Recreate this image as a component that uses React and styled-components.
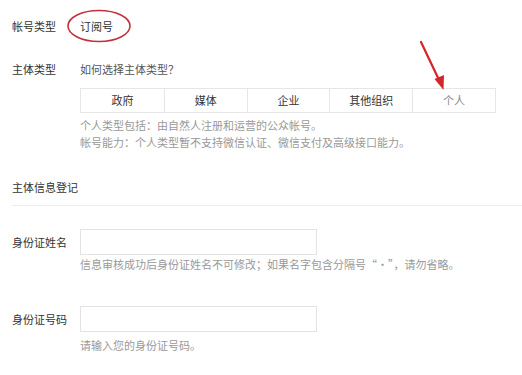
import styled, { createGlobalStyle } from "styled-components";

const Global = createGlobalStyle`
  html, body { margin: 0; padding: 0; background: #fff; }
  body {
    font-family: "Noto Sans CJK SC", "Noto Sans", sans-serif;
    font-size: 11px;
    color: #333;
  }
`;

const Page = styled.div`
  position: relative;
  width: 522px;
  height: 375px;
  overflow: hidden;
  padding: 16px 0 0 12px;
  box-sizing: border-box;
`;

const Row = styled.div`
  display: flex;
  align-items: ${(p) => (p.$center ? "center" : "flex-start")};
  margin-top: ${(p) => p.$mt || 0}px;
  line-height: 20px;
`;

const Label = styled.div`
  width: 68px;
  flex: none;
  color: #333;
`;

const Body = styled.div`
  flex: 1;
`;

const Value = styled.span`
  position: relative;
  display: inline-block;
  color: #333;
`;

const Circle = styled.svg`
  position: absolute;
  left: -13px;
  top: -6px;
  overflow: visible;
`;

const Question = styled.span`
  color: #555;
`;

const Tabs = styled.div`
  display: grid;
  grid-template-columns: repeat(5, 1fr);
  width: 416px;
  margin-top: 9px;
  border: 1px solid #e6e6e6;
  box-sizing: border-box;
  margin-left: 68px;
`;

const Tab = styled.div`
  height: 23px;
  line-height: 23px;
  text-align: center;
  color: ${(p) => (p.$active ? "#8a8a8a" : "#333")};
  border-left: ${(p) => (p.$first ? "none" : "1px solid #e6e6e6")};
`;

const Desc = styled.div`
  margin: ${(p) => p.$mt || 0}px 0 0 68px;
  color: #999;
  line-height: 17px;
`;

const SectionTitle = styled.div`
  margin-top: 26px;
  line-height: 20px;
  padding-bottom: 8px;
  border-bottom: 1px solid #eee;
  color: #333;
`;

const Input = styled.div`
  width: 237px;
  height: 26px;
  box-sizing: border-box;
  border: 1px solid #e3e3e3;
  background: #fff;
`;

const Arrow = styled.svg`
  position: absolute;
  left: 0;
  top: 0;
  pointer-events: none;
`;

const tabs = ["政府", "媒体", "企业", "其他组织", "个人"];

export default function App() {
  return (
    <>
      <Global />
      <Page>
        <Row>
          <Label>帐号类型</Label>
          <Body>
            <Value>
              订阅号
              <Circle width="64" height="32" viewBox="0 0 64 32">
                <ellipse cx="32" cy="16" rx="31" ry="15.5" fill="none" stroke="#c4303b" strokeWidth="1.6" />
              </Circle>
            </Value>
          </Body>
        </Row>
        <Row $mt={23}>
          <Label>主体类型</Label>
          <Body>
            <Question>如何选择主体类型？</Question>
          </Body>
        </Row>
        <Tabs>
          {tabs.map((t, i) => (
            <Tab key={t} $first={i === 0} $active={i === tabs.length - 1}>
              {t}
            </Tab>
          ))}
        </Tabs>
        <Desc $mt={4}>
          个人类型包括：由自然人注册和运营的公众帐号。
          <br />
          帐号能力：个人类型暂不支持微信认证、微信支付及高级接口能力。
        </Desc>
        <SectionTitle>主体信息登记</SectionTitle>
        <Row $center $mt={23}>
          <Label>身份证姓名</Label>
          <Input />
        </Row>
        <Desc $mt={1}>信息审核成功后身份证姓名不可修改；如果名字包含分隔号“·”，请勿省略。</Desc>
        <Row $center $mt={33}>
          <Label>身份证号码</Label>
          <Input />
        </Row>
        <Desc $mt={5}>请输入您的身份证号码。</Desc>
        <Arrow width="522" height="375" viewBox="0 0 522 375">
          <line x1="421" y1="42" x2="440" y2="82" stroke="#d3262c" strokeWidth="2.2" strokeLinecap="round" />
          <polygon points="443.5,90 434.5,79 444,75" fill="#d3262c" />
        </Arrow>
      </Page>
    </>
  );
}
